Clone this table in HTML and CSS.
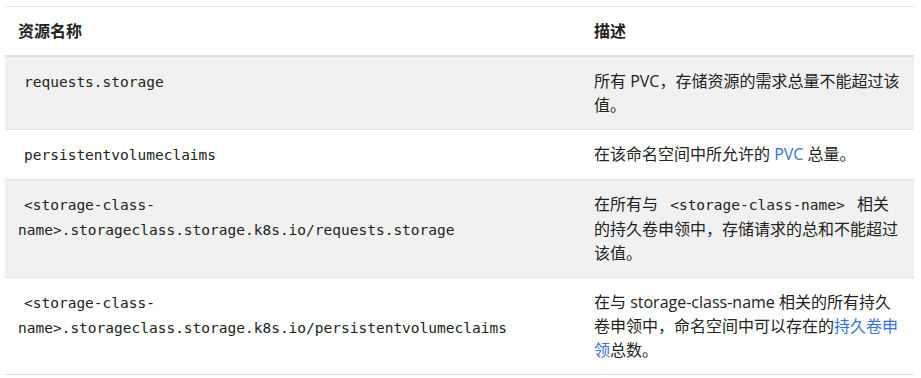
FILE: index.html
```html
<!DOCTYPE html>
<html lang="zh-CN">
<head>
<meta charset="utf-8">
<title>存储资源配额</title>
<link rel="stylesheet" href="styles.css">
</head>
<body>
<table class="quota">
  <colgroup>
    <col class="col-name">
    <col class="col-desc">
  </colgroup>
  <thead>
    <tr>
      <th>资源名称</th>
      <th>描述</th>
    </tr>
  </thead>
  <tbody>
    <tr>
      <td><code>requests.storage</code></td>
      <td>所有 PVC，存储资源的需求总量不能超过该值。</td>
    </tr>
    <tr>
      <td><code>persistentvolumeclaims</code></td>
      <td>在该命名空间中所允许的 <a href="#">PVC</a> 总量。</td>
    </tr>
    <tr>
      <td><code>&lt;storage-class-name&gt;.storageclass.storage.k8s.io/requests.storage</code></td>
      <td>在所有与 <code>&lt;storage-class-name&gt;</code> 相关的持久卷申领中，存储请求的总和不能超过该值。</td>
    </tr>
    <tr>
      <td><code>&lt;storage-class-name&gt;.storageclass.storage.k8s.io/persistentvolumeclaims</code></td>
      <td>在与 storage-class-name 相关的所有持久卷申领中，命名空间中可以存在的<a href="#">持久卷申领</a>总数。</td>
    </tr>
  </tbody>
</table>
</body>
</html>
```
FILE: styles.css
```css
html, body {
  margin: 0;
  background: #ffffff;
}

body {
  padding: 6px 7px 0 5px;
  font-family: "Open Sans", "Noto Sans CJK SC", sans-serif;
  font-size: 16px;
  color: #222222;
}

.quota {
  width: 909px;
  border-collapse: collapse;
  table-layout: fixed;
  border-top: 1px solid #e6e6e6;
}

.col-name {
  width: 576px;
}

.col-desc {
  width: 333px;
}

.quota th,
.quota td {
  text-align: left;
  vertical-align: top;
  padding: 12px 13px;
  line-height: 24px;
}

.quota th {
  font-weight: 700;
  border-bottom: 2px solid #dedede;
}

.quota td {
  border-bottom: 1px solid #e0e0e0;
}

.quota tbody tr:nth-child(odd) {
  background: #f1f1f1;
}

.quota code {
  font-family: "DejaVu Sans Mono", "Liberation Mono", monospace;
  font-size: 14.5px;
  line-height: 24px;
  color: #222222;
  padding: 0 6px;
}

.quota td:last-child code {
  padding: 0 8px;
}

.quota a {
  color: #3371e3;
  text-decoration: none;
}
```
